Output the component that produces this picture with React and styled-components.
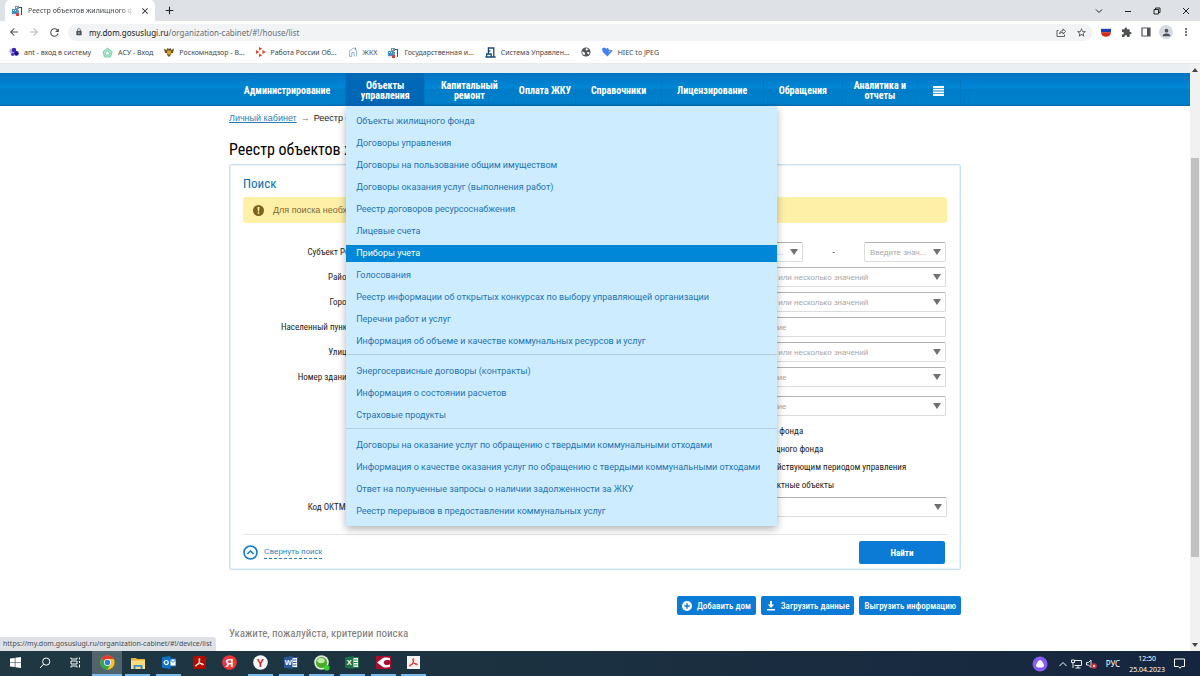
import styled, { createGlobalStyle, css } from 'styled-components';
import {
  MdAdd,
  MdArrowBack,
  MdArrowForward,
  MdClose,
  MdExtension,
  MdLock,
  MdMoreVert,
  MdPerson,
  MdRefresh,
  MdStarBorder,
} from 'react-icons/md';

const condensed = `'Roboto Condensed', 'Liberation Sans Narrow', Roboto, sans-serif`;
const plain = `'Liberation Sans', Arial, sans-serif`;
const system = `'Noto Sans', 'Open Sans', sans-serif`;

const NAV = [
  'Администрирование',
  'Объекты управления',
  'Капитальный ремонт',
  'Оплата ЖКУ',
  'Справочники',
  'Лицензирование',
  'Обращения',
  'Аналитика и отчеты',
];

const MENU = [
  [
    'Объекты жилищного фонда',
    'Договоры управления',
    'Договоры на пользование общим имуществом',
    'Договоры оказания услуг (выполнения работ)',
    'Реестр договоров ресурсоснабжения',
    'Лицевые счета',
    'Приборы учета',
    'Голосования',
    'Реестр информации об открытых конкурсах по выбору управляющей организации',
    'Перечни работ и услуг',
    'Информация об объеме и качестве коммунальных ресурсов и услуг',
  ],
  [
    'Энергосервисные договоры (контракты)',
    'Информация о состоянии расчетов',
    'Страховые продукты',
  ],
  [
    'Договоры на оказание услуг по обращению с твердыми коммунальными отходами',
    'Информация о качестве оказания услуг по обращению с твердыми коммунальными отходами',
    'Ответ на полученные запросы о наличии задолженности за ЖКУ',
    'Реестр перерывов в предоставлении коммунальных услуг',
  ],
];

const ADDRESS = [
  'Субъект РФ',
  'Район',
  'Город',
  'Населенный пункт',
  'Улица',
  'Номер здания',
];

const FLAGS = [
  'Объекты жилищного фонда',
  'Помещения нежилищного фонда',
  'Только объекты с действующим периодом управления',
  'Отображать некорректные объекты',
];

const HouseIcon = () => (
  <svg width="11" height="11" viewBox="0 0 11 11">
    <path d="M3 1h4v9H3z" fill="#7d93ab" />
    <path d="M7 2h3v8H9V3H7z" fill="#24557f" />
    <path d="M0 4h5v6H0z" fill="#3f8fc8" />
    <path d="M1 5h1v1H1zM3 5h1v1H3zM4 2h1v1H4zM6 4h1v1H6z" fill="#fff" />
    <path d="M0 9h4v2H0z" fill="#e9edf2" />
    <path d="M4 8h3v3H4z" fill="#d6453c" />
  </svg>
);

const AntIcon = () => (
  <svg width="10" height="10" viewBox="0 0 10 10">
    <circle cx="3" cy="4" r="2.6" fill="#b6a8e6" />
    <circle cx="5" cy="3" r="2.2" fill="#3a25b8" />
    <circle cx="7.4" cy="6.4" r="2.4" fill="#1d12a0" />
    <circle cx="3.6" cy="7.3" r="1.6" fill="#4a35c8" />
  </svg>
);

const AsuIcon = () => (
  <svg width="11" height="11" viewBox="0 0 11 11" fill="none" stroke="#7fd3ae">
    <path d="M1 4.6 5.5 1 10 4.6 8.6 10H2.4z" fill="#a9e3c9" />
    <path d="M3.6 8V5.6L5.5 4l1.9 1.6V8z" fill="#fff" />
  </svg>
);

const EagleIcon = () => (
  <svg width="10" height="10" viewBox="0 0 10 10">
    <path d="M0 1.5 2.6 3 3.4 1 5 2l1.6-1 .8 2L10 1.5 9 6H7.4L6 9.6H4L2.6 6H1z" fill="#6b561c" />
    <path d="M3.2 3.4h3.6v3L5 8 3.2 6.4z" fill="#e0aa26" />
  </svg>
);

const WorkIcon = () => (
  <svg width="10" height="10" viewBox="0 0 10 10" fill="#e0492f">
    <path d="M3 0 6.4 1.8 3 3.6zM6.4 3 10 5 6.4 7zM3 6.4 6.4 8.2 3 10zM0 3 3.4 5 0 7z" />
  </svg>
);

const HomeMarkIcon = () => (
  <svg width="10" height="10" viewBox="0 0 10 10" fill="none" stroke="#8fb4d2">
    <path d="M1 4.4 5.4 1 8.6 3.4V9.4M1.6 4.4v5h2.2V5.6h2.4v3.8" />
    <path d="M7.6 0.6v2" stroke="#4f7fa8" />
  </svg>
);

const ManageIcon = () => (
  <svg width="11" height="11" viewBox="0 0 11 11" fill="none" stroke="#174a7c" strokeWidth="1.3">
    <path d="M3.4 7V1h5.4v9M.4 10h10.2M1.6 10V7h4.6v3M3.4 4h2" />
  </svg>
);

const GlobeIcon = () => (
  <svg width="10" height="10" viewBox="0 0 10 10">
    <circle cx="5" cy="5" r="4.6" fill="#55585c" />
    <path d="M1.2 4.4 3 5l1.2 1.4-.8 1.8C2 7.6 1.1 6 1.2 4.4zM5 1.2l2.4.8L6 3.4 4.6 3zM6 5l2.6.2-.8 2.2L6.4 6.8z" fill="#fff" />
  </svg>
);

const HiecIcon = () => (
  <svg width="11" height="10" viewBox="0 0 11 10">
    <path d="M0 1.5 2.6.6 4.4 1.8 6 .8l.8 2L10.6 3.2 9 5.6 5.4 9.4.8 5z" fill="#3f83f1" />
    <path d="M6.2 5.2 8.6 3.6" stroke="#fff" strokeWidth=".5" />
  </svg>
);

const BOOKMARKS = [
  { icon: <AntIcon />, text: 'ant - вход в систему' },
  { icon: <AsuIcon />, text: 'АСУ - Вход' },
  { icon: <EagleIcon />, text: 'Роскомнадзор - В...' },
  { icon: <WorkIcon />, text: 'Работа России Об...' },
  { icon: <HomeMarkIcon />, text: 'ЖКХ' },
  { icon: <HouseIcon />, text: 'Государственная и...' },
  { icon: <ManageIcon />, text: 'Система Управлен...' },
  { icon: <GlobeIcon />, text: '' },
  { icon: <HiecIcon />, text: 'HIEC to JPEG' },
];

const ChromeIcon = () => (
  <svg width="15" height="15" viewBox="0 0 16 16">
    <circle cx="8" cy="8" r="7.6" fill="#fbc116" />
    <path d="M8 8 1.4 4.2A7.6 7.6 0 0 1 14.6 4.2H8z" fill="#e33b2e" />
    <path d="M8 8 1.4 4.2A7.6 7.6 0 0 0 7.6 15.6L11.2 9.8z" fill="#2da94f" />
    <circle cx="8" cy="8" r="3.7" fill="#fff" />
    <circle cx="8" cy="8" r="2.9" fill="#2f7de1" />
  </svg>
);

const ExplorerIcon = () => (
  <svg width="14" height="12" viewBox="0 0 14 12">
    <path d="M0 1h5l1 1h8v10H0z" fill="#e9b23c" />
    <path d="M0 3.5h14V12H0z" fill="#fbdc7f" />
    <path d="M2.5 8h9v4h-2V9.8h-5V12h-2z" fill="#3c8fd0" />
  </svg>
);

// Office-style tile: letter on a coloured sheet with a page behind it
const SheetIcon = ({ letter, color }) => (
  <svg width="14" height="13" viewBox="0 0 14 13">
    <path d="M7 1.5h6.5v10H7z" fill="#fff" stroke={color} />
    <path d="M9 4h3.5M9 6.5h3.5M9 9h3.5" stroke={color} />
    <path d="M0 1.2 8.5 0v13L0 11.8z" fill={color} />
    <text x="4.2" y="9.3" textAnchor="middle" fontSize="7.5" fontWeight="700" fontFamily="Liberation Sans, sans-serif" fill="#fff">
      {letter}
    </text>
  </svg>
);

const OutlookIcon = () => (
  <svg width="14" height="13" viewBox="0 0 14 13">
    <path d="M6 3h8v7H6z" fill="#fff" stroke="#0f74c8" />
    <path d="M8 3.5 11 6.5 14 3.5" fill="none" stroke="#0f74c8" />
    <path d="M0 1.2 8.5 0v13L0 11.8z" fill="#0f74c8" />
    <circle cx="4.2" cy="6.5" r="2" fill="none" stroke="#fff" strokeWidth="1.2" />
  </svg>
);

const AcrobatIcon = ({ light }) => (
  <svg width="13" height="13" viewBox="0 0 13 13">
    <rect width="13" height="13" rx={light ? 0 : 2} fill={light ? '#f4f4f4' : '#b30b00'} />
    <path
      d="M6.3 2.5c1.2 0 .2 3.2-.8 4.8C4.5 9 3.2 10.6 2.5 10c-.7-.8 2-2 4.2-2.3 2.2-.3 4 .1 3.8.8-.3.9-2.4-.1-3.5-1.6C6 5.5 5.4 2.5 6.3 2.5z"
      fill="none"
      stroke={light ? '#d32a20' : '#fff'}
    />
  </svg>
);

const RoundLetter = ({ letter, color, fill }) => (
  <svg width="15" height="15" viewBox="0 0 15 15">
    <circle cx="7.5" cy="7.5" r="7.3" fill={fill} />
    <text x="7.5" y="11.5" textAnchor="middle" fontSize="11" fontWeight="700" fontFamily="Liberation Sans, sans-serif" fill={color}>
      {letter}
    </text>
  </svg>
);

const BallIcon = () => (
  <svg width="16" height="16" viewBox="0 0 16 16">
    <circle cx="7.5" cy="7.5" r="7.3" fill="#dcebd9" />
    <circle cx="7.5" cy="7.5" r="5.6" fill="#4fa72c" />
    <ellipse cx="7" cy="5.6" rx="3.8" ry="2.6" fill="#bfe7a6" />
    <circle cx="12.8" cy="12.8" r="2.8" fill="#35d32c" />
  </svg>
);

const ConsultIcon = () => (
  <svg width="15" height="13" viewBox="0 0 15 13">
    <rect width="15" height="13" fill="#a80f2f" />
    <path d="M14 2.2C12 1.4 9 1.2 7 2L1 6.5 7 11c2 .8 5 .6 7-.2V8.600c-2 .8-4.500.6-5.500-.4a2.300 2.300 0 0 1 0-3.400c1-1 3.500-1.200 5.500-.4z" fill="#fff" />
  </svg>
);

const APPS = [
  { name: 'Chrome', icon: <ChromeIcon />, open: true, active: true },
  { name: 'Проводник', icon: <ExplorerIcon />, open: true },
  { name: 'Outlook', icon: <OutlookIcon />, open: true },
  { name: 'Acrobat', icon: <AcrobatIcon /> },
  { name: 'Яндекс', icon: <RoundLetter letter="Я" color="#fff" fill="#f0353b" /> },
  { name: 'Браузер', icon: <RoundLetter letter="Y" color="#d8232a" fill="#f7f7f7" />, open: true },
  { name: 'Word', icon: <SheetIcon letter="W" color="#2b579a" />, open: true },
  { name: 'Агент', icon: <BallIcon />, open: true },
  { name: 'Excel', icon: <SheetIcon letter="X" color="#1e7145" />, open: true },
  { name: 'Консультант', icon: <ConsultIcon />, open: true },
  { name: 'Reader', icon: <AcrobatIcon light />, open: true },
];

const Dropdown = ({ id, label, text }) => (
  <SelectBox>
    <Select id={id} aria-label={label}>
      <option>{text}</option>
    </Select>
    <svg width="8" height="6" viewBox="0 0 8 6">
      <path d="M0 0h8L4 6z" fill="#717171" />
    </svg>
  </SelectBox>
);

const Browser = () => (
  <header>
    <TabStrip>
      <Tab>
        <HouseIcon />
        <TabTitle>Реестр объектов жилищного фонда</TabTitle>
        <IconButton aria-label="Закрыть вкладку">
          <MdClose size={10} />
        </IconButton>
      </Tab>
      <NewTab aria-label="Новая вкладка">
        <MdAdd size={13} />
      </NewTab>
      <WindowControls>
        <IconButton aria-label="Поиск вкладок">
          <svg width="8" height="8" viewBox="0 0 8 8" fill="none" stroke="currentColor">
            <path d="M1 2.5 4 5.5 7 2.5" />
          </svg>
        </IconButton>
        <IconButton aria-label="Свернуть">
          <svg width="8" height="8" viewBox="0 0 8 8" stroke="currentColor">
            <path d="M1 4.5h6" />
          </svg>
        </IconButton>
        <IconButton aria-label="Восстановить">
          <svg width="8" height="8" viewBox="0 0 8 8" fill="none" stroke="currentColor">
            <path d="M1 2.5h4.5V7H1zM2.5 2.5V1H7v4.5H5.5" />
          </svg>
        </IconButton>
        <IconButton aria-label="Закрыть">
          <svg width="8" height="8" viewBox="0 0 8 8" stroke="currentColor">
            <path d="M1 1l6 6M7 1 1 7" />
          </svg>
        </IconButton>
      </WindowControls>
    </TabStrip>
    <Toolbar>
      <IconButton aria-label="Назад">
        <MdArrowBack size={12} />
      </IconButton>
      <IconButton aria-label="Вперед" $muted>
        <MdArrowForward size={12} />
      </IconButton>
      <IconButton aria-label="Обновить">
        <MdRefresh size={13} />
      </IconButton>
      <AddressBar>
        <MdLock size={8} />
        <Url>
          my.dom.gosuslugi.ru<span>/organization-cabinet/#!/house/list</span>
        </Url>
        <IconButton aria-label="Поделиться">
          <svg width="10" height="10" viewBox="0 0 10 10" fill="none" stroke="currentColor" strokeWidth=".9">
            <path d="M2.5 3.5H1v6h7.5V7.5M3.5 7c.3-2.5 1.5-3.3 3.5-3.4V1.8L9.6 4.5 7 7V5.3C5.3 5.3 4.3 5.8 3.5 7z" />
          </svg>
        </IconButton>
        <IconButton aria-label="В закладки">
          <MdStarBorder size={11} />
        </IconButton>
      </AddressBar>
      <IconButton aria-label="Расширение">
        <svg width="10" height="10" viewBox="0 0 10 10">
          <path d="M0 1.5h10V5.3H0z" fill="#1c3fb0" />
          <path d="M0 5.2h10A5 4.6 0 0 1 0 5.2z" fill="#d52b1e" />
          <path d="M0 .6h10v1.2H0z" fill="#f2f2f2" />
        </svg>
      </IconButton>
      <IconButton aria-label="Расширения">
        <MdExtension size={11} />
      </IconButton>
      <IconButton aria-label="Боковая панель">
        <svg width="10" height="10" viewBox="0 0 10 10">
          <path d="M1 1h8v8H1z" fill="none" stroke="currentColor" strokeWidth="1.2" />
          <path d="M6 1h3v8H6z" fill="currentColor" />
        </svg>
      </IconButton>
      <Avatar aria-label="Профиль">
        <MdPerson size={11} />
      </Avatar>
      <IconButton aria-label="Меню">
        <MdMoreVert size={12} />
      </IconButton>
    </Toolbar>
    <Bookmarks>
      {BOOKMARKS.map(({ icon, text }) => (
        <a href="#bookmark" key={text} aria-label={text || 'Сайт'}>
          {icon}
          {text}
        </a>
      ))}
    </Bookmarks>
  </header>
);

const SiteNav = () => (
  <NavBar>
    <NavGrid>
      {NAV.map((name, index) => (
        <NavItem key={name} $active={index === 1}>
          <NavLink href="#nav">{name}</NavLink>
          {index === 1 && (
            <Menu>
              {MENU.map((group) => (
                <MenuGroup key={group[0]}>
                  {group.map((text) => (
                    <MenuLink href="#menu" key={text} $active={text === 'Приборы учета'}>
                      {text}
                    </MenuLink>
                  ))}
                </MenuGroup>
              ))}
            </Menu>
          )}
        </NavItem>
      ))}
      <NavItem>
        <NavLink href="#all" aria-label="Все разделы">
          <svg width="11" height="10" viewBox="0 0 11 10" stroke="#fff" strokeWidth="1.8">
            <path d="M0 1h11M0 3.7h11M0 6.3h11M0 9h11" />
          </svg>
        </NavLink>
      </NavItem>
    </NavGrid>
  </NavBar>
);

const SearchPanel = () => (
  <Panel>
    <PanelTitle>Поиск</PanelTitle>
    <Warning>
      <svg width="11" height="11" viewBox="0 0 11 11">
        <circle cx="5.5" cy="5.5" r="5.5" fill="#7c6421" />
        <path d="M4.5 2h2L6.1 6.5H4.9zM4.7 7.3h1.6v1.5H4.7z" fill="#fff0a8" />
      </svg>
      Для поиска необходимо указать адрес
    </Warning>
    <Form>
      <Column>
        {ADDRESS.map((name, index) => (
          <Field key={name}>
            <label htmlFor={`address-${index}`}>{name}</label>
            <Dropdown id={`address-${index}`} text="" />
          </Field>
        ))}
      </Column>
      <Column>
        <Range>
          <Dropdown label="Значение с" text="Введите знач..." />
          <span>-</span>
          <Dropdown label="Значение по" text="Введите знач..." />
        </Range>
        <Dropdown label="Тип" text="Выберите одно или несколько значений" />
        <Dropdown label="Состояние" text="Выберите одно или несколько значений" />
        <TextInput aria-label="Номер" placeholder="Введите значение" />
        <Dropdown label="Способ управления" text="Выберите одно или несколько значений" />
        <Dropdown label="Организация" text="Введите значение" />
        <Extra>
          <Dropdown label="Основание" text="Введите значение" />
        </Extra>
        <Flags>
          {FLAGS.map((text) => (
            <label key={text}>
              <input type="checkbox" />
              {text}
            </label>
          ))}
        </Flags>
      </Column>
    </Form>
    <Field>
      <label htmlFor="oktmo">Код ОКТМО</label>
      <Dropdown id="oktmo" text="" />
    </Field>
    <PanelFooter>
      <Collapse>
        <svg width="15" height="15" viewBox="0 0 15 15" fill="none" stroke="#0c7bd6" strokeWidth="1.6">
          <circle cx="7.5" cy="7.5" r="6.5" />
          <path d="M4.3 9 7.5 6l3.2 3" />
        </svg>
        <span>Свернуть поиск</span>
      </Collapse>
      <SubmitButton>Найти</SubmitButton>
    </PanelFooter>
  </Panel>
);

const Taskbar = () => (
  <Bar>
    <TaskButton aria-label="Пуск">
      <svg width="11" height="11" viewBox="0 0 11 11" fill="#fff">
        <path d="M0 1.5 4.8.9v4.3H0zM5.4.8 11 0v5.2H5.4zM0 5.8h4.8v4.3L0 9.5zM5.4 5.8H11V11l-5.6-.8z" />
      </svg>
    </TaskButton>
    <TaskButton aria-label="Поиск">
      <svg width="12" height="12" viewBox="0 0 12 12" fill="none" stroke="#fff">
        <circle cx="7.2" cy="4.6" r="3.6" />
        <path d="M4.6 7.2 1 11" />
      </svg>
    </TaskButton>
    <TaskButton aria-label="Представление задач">
      <svg width="11" height="11" viewBox="0 0 11 11" fill="none" stroke="#fff">
        <path d="M1 .5v1.5h6V.5M1 4h6v3H1zM1 10.5V9h6v1.5M9.5.5v2M9.5 4v2M9.5 7.5v3" />
      </svg>
    </TaskButton>
    <Apps>
      {APPS.map(({ name, icon, open, active }) => (
        <TaskButton key={name} aria-label={name} $open={open} $active={active}>
          {icon}
        </TaskButton>
      ))}
    </Apps>
    <Tray>
      <svg width="16" height="16" viewBox="0 0 16 16">
        <circle cx="8" cy="8" r="7.5" fill="#8a5cf6" />
        <path d="M8 4c1.5 0 4 4 4 5.5S10.5 11.5 8 11.5 4 11 4 9.500 6.500 4 8 4z" fill="#fff" />
      </svg>
      <TrayIcons>
        <svg width="8" height="6" viewBox="0 0 8 6" fill="none" stroke="#fff">
          <path d="M.5 5 4 1.5 7.5 5" />
        </svg>
        <svg width="11" height="10" viewBox="0 0 11 10" fill="none" stroke="#e8ecf0">
          <path d="M3.5 1.5h7v5h-7M7 6.5v2.5M4.5 9h5M.5 1h3v2.5h-3zM2 3.5V9" />
        </svg>
        <svg width="11" height="10" viewBox="0 0 11 10">
          <path d="M.5 3.5h2L5 1v7.5L2.5 6h-2z" fill="none" stroke="#e8ecf0" />
          <circle cx="8" cy="7" r="2.8" fill="#d8323c" />
          <path d="M7 6l2 2M9 6 7 8" stroke="#fff" strokeWidth=".8" />
        </svg>
      </TrayIcons>
      <span>РУС</span>
      <Clock>
        <span>12:50</span>
        <span>25.04.2023</span>
      </Clock>
      <svg width="11" height="11" viewBox="0 0 11 11" fill="none" stroke="#fff">
        <path d="M.5 1h10v7.5H7.5L6 10.3 4.5 8.5h-4z" />
      </svg>
    </Tray>
  </Bar>
);

const App = () => (
  <Window>
    <GlobalStyle />
    <Browser />
    <Viewport>
      <Page>
        <SiteNav />
        <Content>
          <Crumbs>
            <a href="#cabinet">Личный кабинет</a>
            <i>→</i>
            <span>Реестр объектов жилищного фонда</span>
          </Crumbs>
          <Title>Реестр объектов жилищного фонда</Title>
          <SearchPanel />
          <Actions>
            <ActionButton>
              <svg width="10" height="10" viewBox="0 0 10 10">
                <circle cx="5" cy="5" r="5" fill="#fff" />
                <path d="M5 2.3v5.4M2.3 5h5.4" stroke="#0c7bd6" strokeWidth="1.4" />
              </svg>
              Добавить дом
            </ActionButton>
            <ActionButton>
              <svg width="10" height="10" viewBox="0 0 10 10" fill="#fff">
                <path d="M4 0h2v3.5h2.2L5 7 1.8 3.5H4zM1 8h8v1.6H1z" />
              </svg>
              Загрузить данные
            </ActionButton>
            <ActionButton>Выгрузить информацию</ActionButton>
          </Actions>
          <Hint>Укажите, пожалуйста, критерии поиска</Hint>
        </Content>
      </Page>
      <Scrollbar>
        <svg width="6" height="4" viewBox="0 0 6 4">
          <path d="M0 4 3 0l3 4z" fill="#444" />
        </svg>
        <Thumb />
        <svg width="6" height="4" viewBox="0 0 6 4">
          <path d="M0 0h6L3 4z" fill="#444" />
        </svg>
      </Scrollbar>
      <Status>https://my.dom.gosuslugi.ru/organization-cabinet/#!/device/list</Status>
    </Viewport>
    <Taskbar />
  </Window>
);

const GlobalStyle = createGlobalStyle`
  * {
    box-sizing: border-box;
  }

  body {
    margin: 0;
    background: #fff;
    font-family: ${condensed};
    font-size: 9px;
    color: #222;
  }

  button {
    font: inherit;
    border: 0;
    cursor: pointer;
  }

  svg {
    flex-shrink: 0;
  }
`;

const Window = styled.div`
  min-height: 100vh;
  display: flex;
  flex-direction: column;
`;

const TabStrip = styled.div`
  display: flex;
  align-items: center;
  height: 21px;
  padding-left: 5px;
  background: #dee1e6;
  font-family: ${system};
  font-size: 7px;
`;

const Tab = styled.div`
  display: flex;
  align-items: center;
  gap: 5px;
  width: 150px;
  height: 21px;
  padding: 0 4px 0 7px;
  background: #fff;
  border-radius: 5px 5px 0 0;
  color: #45494d;
`;

const TabTitle = styled.span`
  flex: 1;
  overflow: hidden;
  white-space: nowrap;
  mask-image: linear-gradient(90deg, #000 88%, transparent);
`;

const IconButton = styled.button`
  display: flex;
  align-items: center;
  justify-content: center;
  width: 20px;
  height: 17px;
  padding: 0;
  background: none;
  color: ${(p) => (p.$muted ? '#b4b7ba' : '#4f5357')};

  ${Tab} & {
    width: 12px;
    color: #222;
  }
`;

const NewTab = styled(IconButton)`
  width: 28px;
  color: #222;
`;

const WindowControls = styled.div`
  display: flex;
  margin-left: auto;

  button {
    width: 29px;
    color: #222;
  }
`;

const Toolbar = styled.div`
  display: flex;
  align-items: center;
  height: 22px;
  padding: 0 4px;
  background: #fff;
`;

const AddressBar = styled.div`
  flex: 1;
  display: flex;
  align-items: center;
  height: 17px;
  margin: 0 3px 0 4px;
  padding: 0 2px 0 7px;
  border-radius: 9px;
  background: #f1f3f4;
  color: #4f5357;
`;

const Url = styled.span`
  flex: 1;
  padding-left: 6px;
  font-family: ${system};
  font-size: 8px;
  color: #222;

  span {
    color: #6c7074;
  }
`;

const Avatar = styled(IconButton)`
  width: 14px;
  height: 14px;
  margin: 0 3px;
  border-radius: 50%;
  background: #d5dbe3;
`;

const Bookmarks = styled.nav`
  display: flex;
  align-items: center;
  gap: 11px;
  height: 21px;
  padding: 0 9px 2px;
  border-bottom: 1px solid #e8eaec;
  font-family: ${system};
  font-size: 7px;

  a {
    display: flex;
    align-items: center;
    gap: 5px;
    color: #43474b;
    text-decoration: none;
  }
`;

const Viewport = styled.div`
  position: relative;
  flex: 1;
  display: flex;
`;

const Page = styled.main`
  flex: 1;
  border-top: 9px solid #e9eff2;
`;

const Scrollbar = styled.div`
  display: flex;
  flex-direction: column;
  align-items: center;
  width: 10px;
  padding: 4px 0;
  background: #f1f1f1;
`;

const Thumb = styled.div`
  width: 8px;
  flex: 1;
  margin: 86px 0;
  background: #c1c1c1;
`;

// link target shown over the page corner
const Status = styled.div`
  position: absolute;
  left: 0;
  bottom: 0;
  height: 14px;
  padding: 0 4px 0 3px;
  border-radius: 0 3px 0 0;
  background: #dee1e6;
  font-family: ${system};
  font-size: 7px;
  line-height: 14px;
  color: #4a4d51;
`;

const NavBar = styled.nav`
  height: 33px;
  background: linear-gradient(#0074c2, #0087d6 45%, #007cc8 50%, #0080cb 92%, #0069b0);
`;

const NavGrid = styled.div`
  display: grid;
  grid-template-columns: 117fr 79fr 89fr 62fr 85fr 102fr 79fr 75fr 43fr;
  max-width: 732px;
  height: 33px;
  margin: 0 auto;
`;

const NavItem = styled.div`
  position: relative;
  border-right: 1px solid #0077c1;

  ${(p) =>
    p.$active &&
    css`
      background: #0068b7;
    `}
`;

const NavLink = styled.a`
  display: flex;
  align-items: center;
  justify-content: center;
  height: 33px;
  padding: 2px 4px 0;
  font-size: 10px;
  font-weight: 700;
  line-height: 10px;
  text-align: center;
  text-decoration: none;
  color: #fff;

  ${NavItem}:nth-child(2) &,
  ${NavItem}:nth-child(3) &,
  ${NavItem}:nth-child(8) & {
    padding: 2px 10px 0;
  }
`;

const Menu = styled.div`
  position: absolute;
  z-index: 10;
  top: 33px;
  left: 0;
  width: 431px;
  background: #cdecff;
  box-shadow: 0 3px 8px rgba(0, 0, 0, 0.3);
  font-family: Roboto, sans-serif;
  font-size: 9px;
`;

const MenuGroup = styled.div`
  display: flex;
  flex-direction: column;
  gap: 5px;
  padding: 8px 0 4px;

  &:first-child {
    padding-top: 7px;
  }

  &:last-child {
    padding-bottom: 6px;
  }

  & + & {
    border-top: 1px solid #b3cde4;
  }
`;

const MenuLink = styled.a`
  padding: 0 10px;
  line-height: 17px;
  white-space: nowrap;
  text-decoration: none;
  color: ${(p) => (p.$active ? '#fff' : '#1e74b4')};
  background: ${(p) => (p.$active ? '#0087d7' : 'none')};
`;

const Content = styled.div`
  max-width: 732px;
  margin: 0 auto;
`;

const Crumbs = styled.div`
  display: flex;
  gap: 4px;
  padding-top: 4px;
  font-family: ${plain};
  font-size: 9px;
  line-height: 16px;
  white-space: nowrap;

  a {
    color: #2b7fb8;
  }

  i {
    font-style: normal;
    color: #777;
  }
`;

const Title = styled.h1`
  margin: 13px 0 3px;
  font-size: 16px;
  font-weight: 400;
  line-height: 22px;
  color: #000;
`;

const Panel = styled.section`
  padding: 10px 13px 5px;
  border: 1px solid #c9e0f2;
  border-radius: 2px;
  box-shadow: inset 0 0 0 1px #eaf3fa;
`;

const PanelTitle = styled.h2`
  margin: 0 0 4px;
  font-size: 13px;
  font-weight: 400;
  line-height: 18px;
  color: #0b6fb5;
`;

const Warning = styled.div`
  display: flex;
  align-items: center;
  gap: 9px;
  height: 26px;
  padding: 0 10px;
  border-radius: 3px;
  background: #fff0a8;
  font-family: ${plain};
  font-size: 9px;
  color: #7c6a3a;
`;

const Form = styled.form`
  display: grid;
  grid-template-columns: 1fr 233px;
  gap: 138px;
  padding: 19px 1px 3px 0;
`;

const Column = styled.div`
  display: flex;
  flex-direction: column;
  gap: 5px;
`;

const Field = styled.div`
  display: flex;
  gap: 8px;

  label {
    width: 108px;
    line-height: 20px;
    text-align: right;
    white-space: nowrap;
  }
`;

const SelectBox = styled.div`
  flex: 1;
  min-width: 0;
  display: grid;
  align-items: center;

  > * {
    grid-area: 1 / 1;
  }

  svg {
    justify-self: end;
    margin-right: 5px;
    pointer-events: none;
  }
`;

const control = css`
  width: 100%;
  height: 20px;
  padding: 0 5px;
  border: 1px solid #dcdcdc;
  border-top-color: #b0b0b0;
  border-radius: 2px;
  background: #fff;
  font-family: ${plain};
  font-size: 8px;
  color: #a8a8a8;
`;

const Select = styled.select`
  ${control}
  appearance: none;
`;

const TextInput = styled.input`
  ${control}

  &::placeholder {
    color: #a8a8a8;
  }
`;

const Range = styled.div`
  display: flex;
  justify-content: flex-end;

  > span {
    width: 61px;
    line-height: 20px;
    text-align: center;
  }

  ${SelectBox} {
    flex: 0 0 82px;
  }
`;

const Extra = styled.div`
  display: flex;
  padding-top: 4px;
`;

// the tick boxes hang to the left of the fields
const Flags = styled.div`
  margin-left: -29px;
  padding-top: 1px;

  label {
    display: flex;
    align-items: center;
    gap: 5px;
    height: 18px;
    white-space: nowrap;
  }

  input {
    width: 10px;
    height: 10px;
    margin: 0;
  }
`;

const PanelFooter = styled.div`
  display: flex;
  align-items: center;
  justify-content: space-between;
  margin-top: 17px;
  padding: 6px 2px 0 0;
  border-top: 1px solid #e6e6e6;
`;

const Collapse = styled.button`
  display: flex;
  align-items: center;
  gap: 6px;
  padding: 0;
  background: none;
  font-family: ${plain};
  font-size: 8px;
  color: #2b7fb8;

  span {
    border-bottom: 1px dashed #2b7fb8;
    line-height: 12px;
  }
`;

const SubmitButton = styled.button`
  width: 86px;
  height: 23px;
  border-radius: 2px;
  background: #0c7bd6;
  font-weight: 700;
  color: #fff;
`;

const Actions = styled.div`
  display: flex;
  justify-content: flex-end;
  gap: 5px;
  margin-top: 26px;
`;

const ActionButton = styled.button`
  display: flex;
  align-items: center;
  gap: 5px;
  height: 19px;
  padding: 0 5px;
  border-radius: 2px;
  background: #0c7bd6;
  font-weight: 500;
  color: #fff;
`;

const Hint = styled.p`
  margin: 10px 0 0;
  font-size: 11px;
  line-height: 18px;
  color: #777;
`;

const Bar = styled.footer`
  display: flex;
  height: 25px;
  background: linear-gradient(90deg, #1f3842, #1b3040 50%, #15253f);
  font-family: ${system};
  color: #fff;
`;

const TaskButton = styled.button`
  display: flex;
  align-items: center;
  justify-content: center;
  width: 30px;
  height: 25px;
  padding: 0;
  background: ${(p) => (p.$active ? '#51646c' : 'none')};
  border-bottom: 2px solid ${(p) => (p.$open ? '#76b9ed' : 'transparent')};
`;

const Apps = styled.div`
  display: grid;
  grid-template-columns: repeat(11, 1fr);
  justify-items: center;
  width: 337px;
  margin-left: 2px;

  ${TaskButton}:not(:first-child) {
    width: 25px;
  }
`;

const Tray = styled.div`
  display: flex;
  align-items: center;
  gap: 9px;
  margin-left: auto;
  padding-right: 15px;
  font-size: 8px;
`;

const TrayIcons = styled.div`
  display: flex;
  align-items: center;
  gap: 4px;
  padding-left: 2px;
`;

const Clock = styled.div`
  display: flex;
  flex-direction: column;
  align-items: center;
  font-size: 7px;
  line-height: 11px;
`;

export default App;
